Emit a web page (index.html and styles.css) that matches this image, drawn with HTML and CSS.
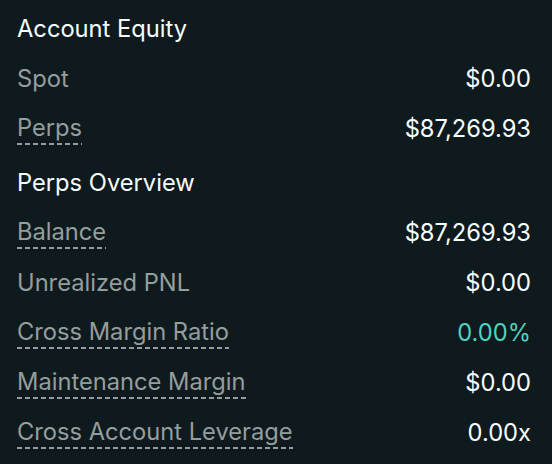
FILE: index.html
```html
<!DOCTYPE html>
<html>
<head>
<meta charset="utf-8">
<link rel="stylesheet" href="styles.css">
</head>
<body>
<div class="panel">
  <section class="section">
    <div class="title">Account Equity</div>
    <div class="row"><span class="label">Spot</span><span class="value">$0.00</span></div>
    <div class="row"><span class="label dashed">Perps</span><span class="value">$87,269.93</span></div>
  </section>
  <section class="section">
    <div class="title">Perps Overview</div>
    <div class="row"><span class="label dashed">Balance</span><span class="value">$87,269.93</span></div>
    <div class="row"><span class="label">Unrealized PNL</span><span class="value">$0.00</span></div>
    <div class="row"><span class="label dashed">Cross Margin Ratio</span><span class="value teal">0.00%</span></div>
    <div class="row"><span class="label dashed">Maintenance Margin</span><span class="value">$0.00</span></div>
    <div class="row"><span class="label dashed">Cross Account Leverage</span><span class="value">0.00x</span></div>
  </section>
</div>
</body>
</html>
```
FILE: styles.css
```css
html, body {
  margin: 0;
  padding: 0;
  background: #0f1a1f;
}
body {
  width: 552px;
  height: 464px;
  overflow: hidden;
  font-family: Inter, "Noto Sans", sans-serif;
  font-size: 23.7px;
}
.panel {
  display: flex;
  flex-direction: column;
  gap: 24px;
  padding: 14px 21px 0 17px;
}
.section {
  display: flex;
  flex-direction: column;
  gap: 20px;
}
.title, .row {
  height: 30px;
  line-height: 30px;
}
.title {
  color: #f6fefd;
}
.row {
  display: flex;
  justify-content: space-between;
  align-items: center;
}
.label {
  color: #949e9c;
}
.dashed {
  background-image: linear-gradient(to right, #949e9c 0 5px, transparent 5px 8px);
  background-size: 8px 2px;
  background-repeat: repeat-x;
  background-position: 0 100%;
  padding-bottom: 2px;
}
.value {
  color: #f6fefd;
}
.teal {
  color: #50d2c1;
}
```
